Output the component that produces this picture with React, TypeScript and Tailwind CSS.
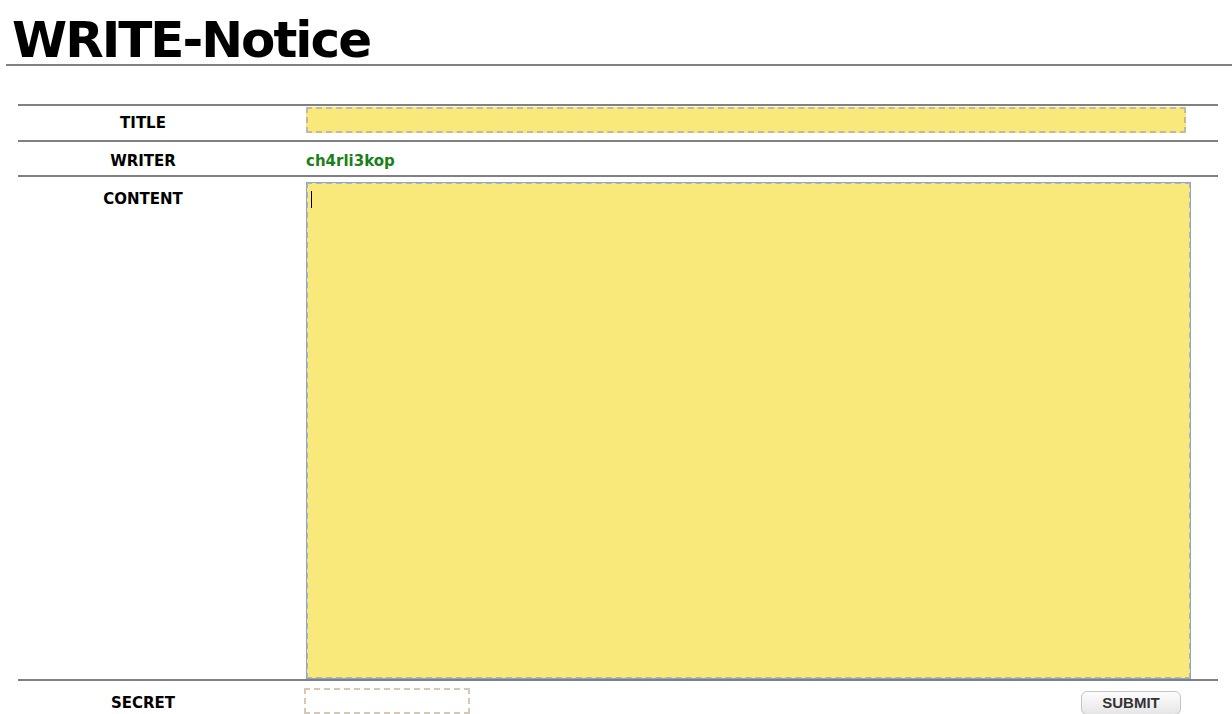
import React from "react";

const labelCls =
  "w-[250px] shrink-0 text-center text-[15px] font-bold text-black";

const App = () => {
  return (
    <div className="w-[1232px] h-[714px] overflow-hidden bg-white font-['DejaVu_Sans',sans-serif]">
      <h1 className="ml-[6px] pl-[6px] pt-[17px] pb-0 text-[50px] leading-[47px] font-bold tracking-[-2px] text-black border-b-2 border-[#808080]">
        WRITE-Notice
      </h1>

      <form className="mx-[18px] mt-[38px] w-[1200px]">
        {/* title */}
        <div className="flex items-center h-[36px] border-t-2 border-[#808080] pt-[1px]">
          <div className={labelCls}>TITLE</div>
          <div className="pl-[38px] flex-1 self-start">
            <input
              type="text"
              className="block w-[880px] h-[26px] bg-[#f9e97a] border-2 border-dashed border-[#c2b8a4] outline-none px-1"
            />
          </div>
        </div>

        {/* writer */}
        <div className="flex items-center h-[35px] border-t-2 border-[#808080] pt-[5px]">
          <div className={labelCls}>WRITER</div>
          <div className="pl-[38px] text-[15px] font-bold text-[#1b7f1b]">
            ch4rli3kop
          </div>
        </div>

        {/* content */}
        <div className="flex h-[504px] border-t-2 border-[#808080] pt-[5px]">
          <div className={labelCls + " pt-[6px]"}>CONTENT</div>
          <div className="pl-[38px] flex-1">
            <div className="relative w-[885px] h-[497px]">
              <textarea className="block w-full h-full resize-none bg-[#f9e97a] border-2 border-dashed border-[#b4b4b4] outline outline-1 outline-[#8ca6cf] outline-offset-[-1px]" />
              <span className="absolute left-[5px] top-[9px] w-[1px] h-[17px] bg-black" />
            </div>
          </div>
        </div>

        {/* secret */}
        <div className="flex items-center h-[40px] border-t-2 border-[#808080]">
          <div className={labelCls + " pt-[6px]"}>SECRET</div>
          <div className="pl-[36px] flex-1 flex items-center justify-between pr-[37px] pt-[1px]">
            <input
              type="password"
              className="block w-[166px] h-[26px] bg-white border-2 border-dashed border-[#d3c9b6] outline-none"
            />
            <button
              type="button"
              className="w-[100px] h-[24px] mt-[4px] rounded-[6px] border border-[#c4c4c4] bg-gradient-to-b from-[#fdfdfd] to-[#e6e6e6] text-[15px] font-bold text-[#333] font-['Liberation_Sans',sans-serif] leading-none"
            >
              SUBMIT
            </button>
          </div>
        </div>
      </form>
    </div>
  );
};

export default App;
